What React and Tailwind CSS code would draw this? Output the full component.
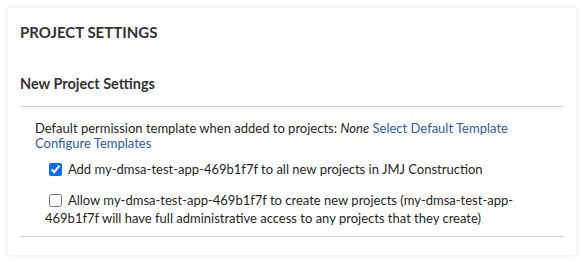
export default function App() {
  return (
    <div className="bg-white p-2 font-['Lato','Liberation_Sans',sans-serif] text-[#1f1f1f]">
      <div className="bg-white px-3 pb-[18px] pt-[14px] shadow-[0_0_6px_rgba(0,0,0,0.12)]">
        <h2 className="text-[15px] font-bold leading-[20px] text-[#333]">PROJECT SETTINGS</h2>
        <h3 className="mt-[32px] text-[14.5px] font-bold leading-[20px] text-[#333]">New Project Settings</h3>
        <div className="mt-[12px] border-t border-[#d6d6d6] pt-[14px] pb-[10px] pl-[15px] text-[13px]">
          <div className="leading-[15px]">
            Default permission template when added to projects: <i>None</i>{' '}
            <a className="text-[#2e5ba8]">Select Default Template</a>
            <br />
            <a className="text-[#2e5ba8]">Configure Templates</a>
          </div>
          <div className="mt-[9px] pl-[10px] leading-[16px]">
            <label className="block">
              <input type="checkbox" defaultChecked className="m-[3px_3px_3px_4px] h-[13px] w-[13px] align-[-2px] accent-[#0b6cf0]" />{' '}
              Add my-dmsa-test-app-469b1f7f to all new projects in JMJ Construction
            </label>
            <label className="mt-[12px] block">
              <input type="checkbox" className="m-[3px_3px_3px_4px] h-[13px] w-[13px] align-[-2px]" />{' '}
              Allow my-dmsa-test-app-469b1f7f to create new projects (my-dmsa-test-app-469b1f7f will have full administrative access to any projects that they create)
            </label>
          </div>
        </div>
        <div className="border-t border-[#d6d6d6]" />
      </div>
    </div>
  );
}
